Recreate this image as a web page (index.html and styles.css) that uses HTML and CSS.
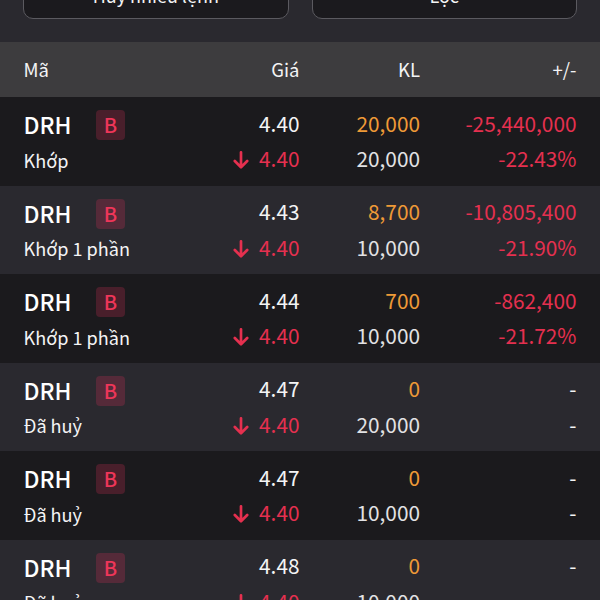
FILE: index.html
```html
<!DOCTYPE html>
<html lang="vi">
<head>
    <meta charset="UTF-8">
    <meta name="viewport" content="width=device-width, initial-scale=1.0">
    <title>Sổ lệnh</title>
    <link rel="stylesheet" href="styles.css">
</head>
<body>
    <svg class="sprite" aria-hidden="true">
        <symbol id="arrow-down" viewBox="0 0 16 18">
            <path d="M8 1.3V16M1.8 10L8 16.2L14.2 10" fill="none" stroke="currentColor" stroke-width="2.7" stroke-linecap="round" stroke-linejoin="round"/>
        </symbol>
    </svg>
    <div class="screen">
        <div class="actions">
            <button>Huỷ nhiều lệnh</button>
            <button>Lọc</button>
        </div>
        <div class="table-head columns">
            <span>Mã</span>
            <span>Giá</span>
            <span>KL</span>
            <span>+/-</span>
        </div>
        <div class="order columns">
            <div class="stock">
                <div class="symbol">DRH <span class="side">B</span></div>
                <div class="status">Khớp</div>
            </div>
            <div class="price">
                <div>4.40</div>
                <div class="down"><svg class="arrow"><use href="#arrow-down"/></svg>4.40</div>
            </div>
            <div class="volume">
                <div class="matched">20,000</div>
                <div class="total">20,000</div>
            </div>
            <div class="profit down">
                <div>-25,440,000</div>
                <div>-22.43%</div>
            </div>
        </div>
        <div class="order columns">
            <div class="stock">
                <div class="symbol">DRH <span class="side">B</span></div>
                <div class="status">Khớp 1 phần</div>
            </div>
            <div class="price">
                <div>4.43</div>
                <div class="down"><svg class="arrow"><use href="#arrow-down"/></svg>4.40</div>
            </div>
            <div class="volume">
                <div class="matched">8,700</div>
                <div class="total">10,000</div>
            </div>
            <div class="profit down">
                <div>-10,805,400</div>
                <div>-21.90%</div>
            </div>
        </div>
        <div class="order columns">
            <div class="stock">
                <div class="symbol">DRH <span class="side">B</span></div>
                <div class="status">Khớp 1 phần</div>
            </div>
            <div class="price">
                <div>4.44</div>
                <div class="down"><svg class="arrow"><use href="#arrow-down"/></svg>4.40</div>
            </div>
            <div class="volume">
                <div class="matched">700</div>
                <div class="total">10,000</div>
            </div>
            <div class="profit down">
                <div>-862,400</div>
                <div>-21.72%</div>
            </div>
        </div>
        <div class="order columns">
            <div class="stock">
                <div class="symbol">DRH <span class="side">B</span></div>
                <div class="status">Đã huỷ</div>
            </div>
            <div class="price">
                <div>4.47</div>
                <div class="down"><svg class="arrow"><use href="#arrow-down"/></svg>4.40</div>
            </div>
            <div class="volume">
                <div class="matched">0</div>
                <div class="total">20,000</div>
            </div>
            <div class="profit">
                <div>-</div>
                <div>-</div>
            </div>
        </div>
        <div class="order columns">
            <div class="stock">
                <div class="symbol">DRH <span class="side">B</span></div>
                <div class="status">Đã huỷ</div>
            </div>
            <div class="price">
                <div>4.47</div>
                <div class="down"><svg class="arrow"><use href="#arrow-down"/></svg>4.40</div>
            </div>
            <div class="volume">
                <div class="matched">0</div>
                <div class="total">10,000</div>
            </div>
            <div class="profit">
                <div>-</div>
                <div>-</div>
            </div>
        </div>
        <div class="order columns">
            <div class="stock">
                <div class="symbol">DRH <span class="side">B</span></div>
                <div class="status">Đã huỷ</div>
            </div>
            <div class="price">
                <div>4.48</div>
                <div class="down"><svg class="arrow"><use href="#arrow-down"/></svg>4.40</div>
            </div>
            <div class="volume">
                <div class="matched">0</div>
                <div class="total">10,000</div>
            </div>
            <div class="profit">
                <div>-</div>
                <div>-</div>
            </div>
        </div>
    </div>
</body>
</html>
```
FILE: styles.css
```css
* {
    box-sizing: border-box;
    margin: 0;
    padding: 0;
}
body {
    background: #2a292f;
    color: #f4f4f5;
    font-family: "Noto Sans CJK SC", "Noto Sans", sans-serif;
    font-size: 20.8px;
}
.sprite {
    display: none;
}
.screen {
    display: flex;
    flex-direction: column;
    height: 600px;
    overflow: hidden;
}
/* list is scrolled, only the bottom of the buttons shows */
.actions {
    display: flex;
    align-items: flex-end;
    flex-shrink: 0;
    gap: 23px;
    height: 42px;
    padding: 0 23px 23px;
}
.actions button {
    background: #1b1a1e;
    border: 1px solid #5b5a60;
    border-radius: 10px;
    color: #f4f4f5;
    flex: 1;
    font-family: inherit;
    font-size: 18px;
    height: 50px;
    line-height: 30px;
    padding-top: 2px;
}
.columns {
    display: grid;
    flex-shrink: 0;
    grid-template-columns: 156px 120px 120.5px 156.5px;
    padding: 0 23.5px;
    text-align: right;
}
.columns > :first-child {
    text-align: left;
}
.table-head {
    background: #3d3c3e;
    font-size: 18.5px;
    height: 55px;
    line-height: 55px;
}
.order {
    background: #2a292f;
    height: 88.5px;
    line-height: 35.5px;
    padding-top: 8.8px;
}
.order:nth-child(odd) {
    background: #1b1a1d;
}
.stock {
    padding-top: 1.7px;
}
.symbol {
    align-items: center;
    color: #fff;
    display: flex;
    font-size: 22.9px;
    font-weight: 500;
    gap: 24.5px;
}
.side {
    background: rgba(229, 48, 89, 0.23);
    border-radius: 4px;
    color: #ef3659;
    font-size: 20px;
    height: 30px;
    line-height: 29px;
    text-align: center;
    width: 29px;
}
.status {
    font-size: 18.1px;
    line-height: 35.5px;
}
.arrow {
    height: 18px;
    margin-right: 10.5px;
    vertical-align: -2px;
    width: 16px;
}
.down {
    color: #e5304f;
}
.matched {
    color: #ef9a37;
}
.total {
    color: #e2e2e4;
}
```
